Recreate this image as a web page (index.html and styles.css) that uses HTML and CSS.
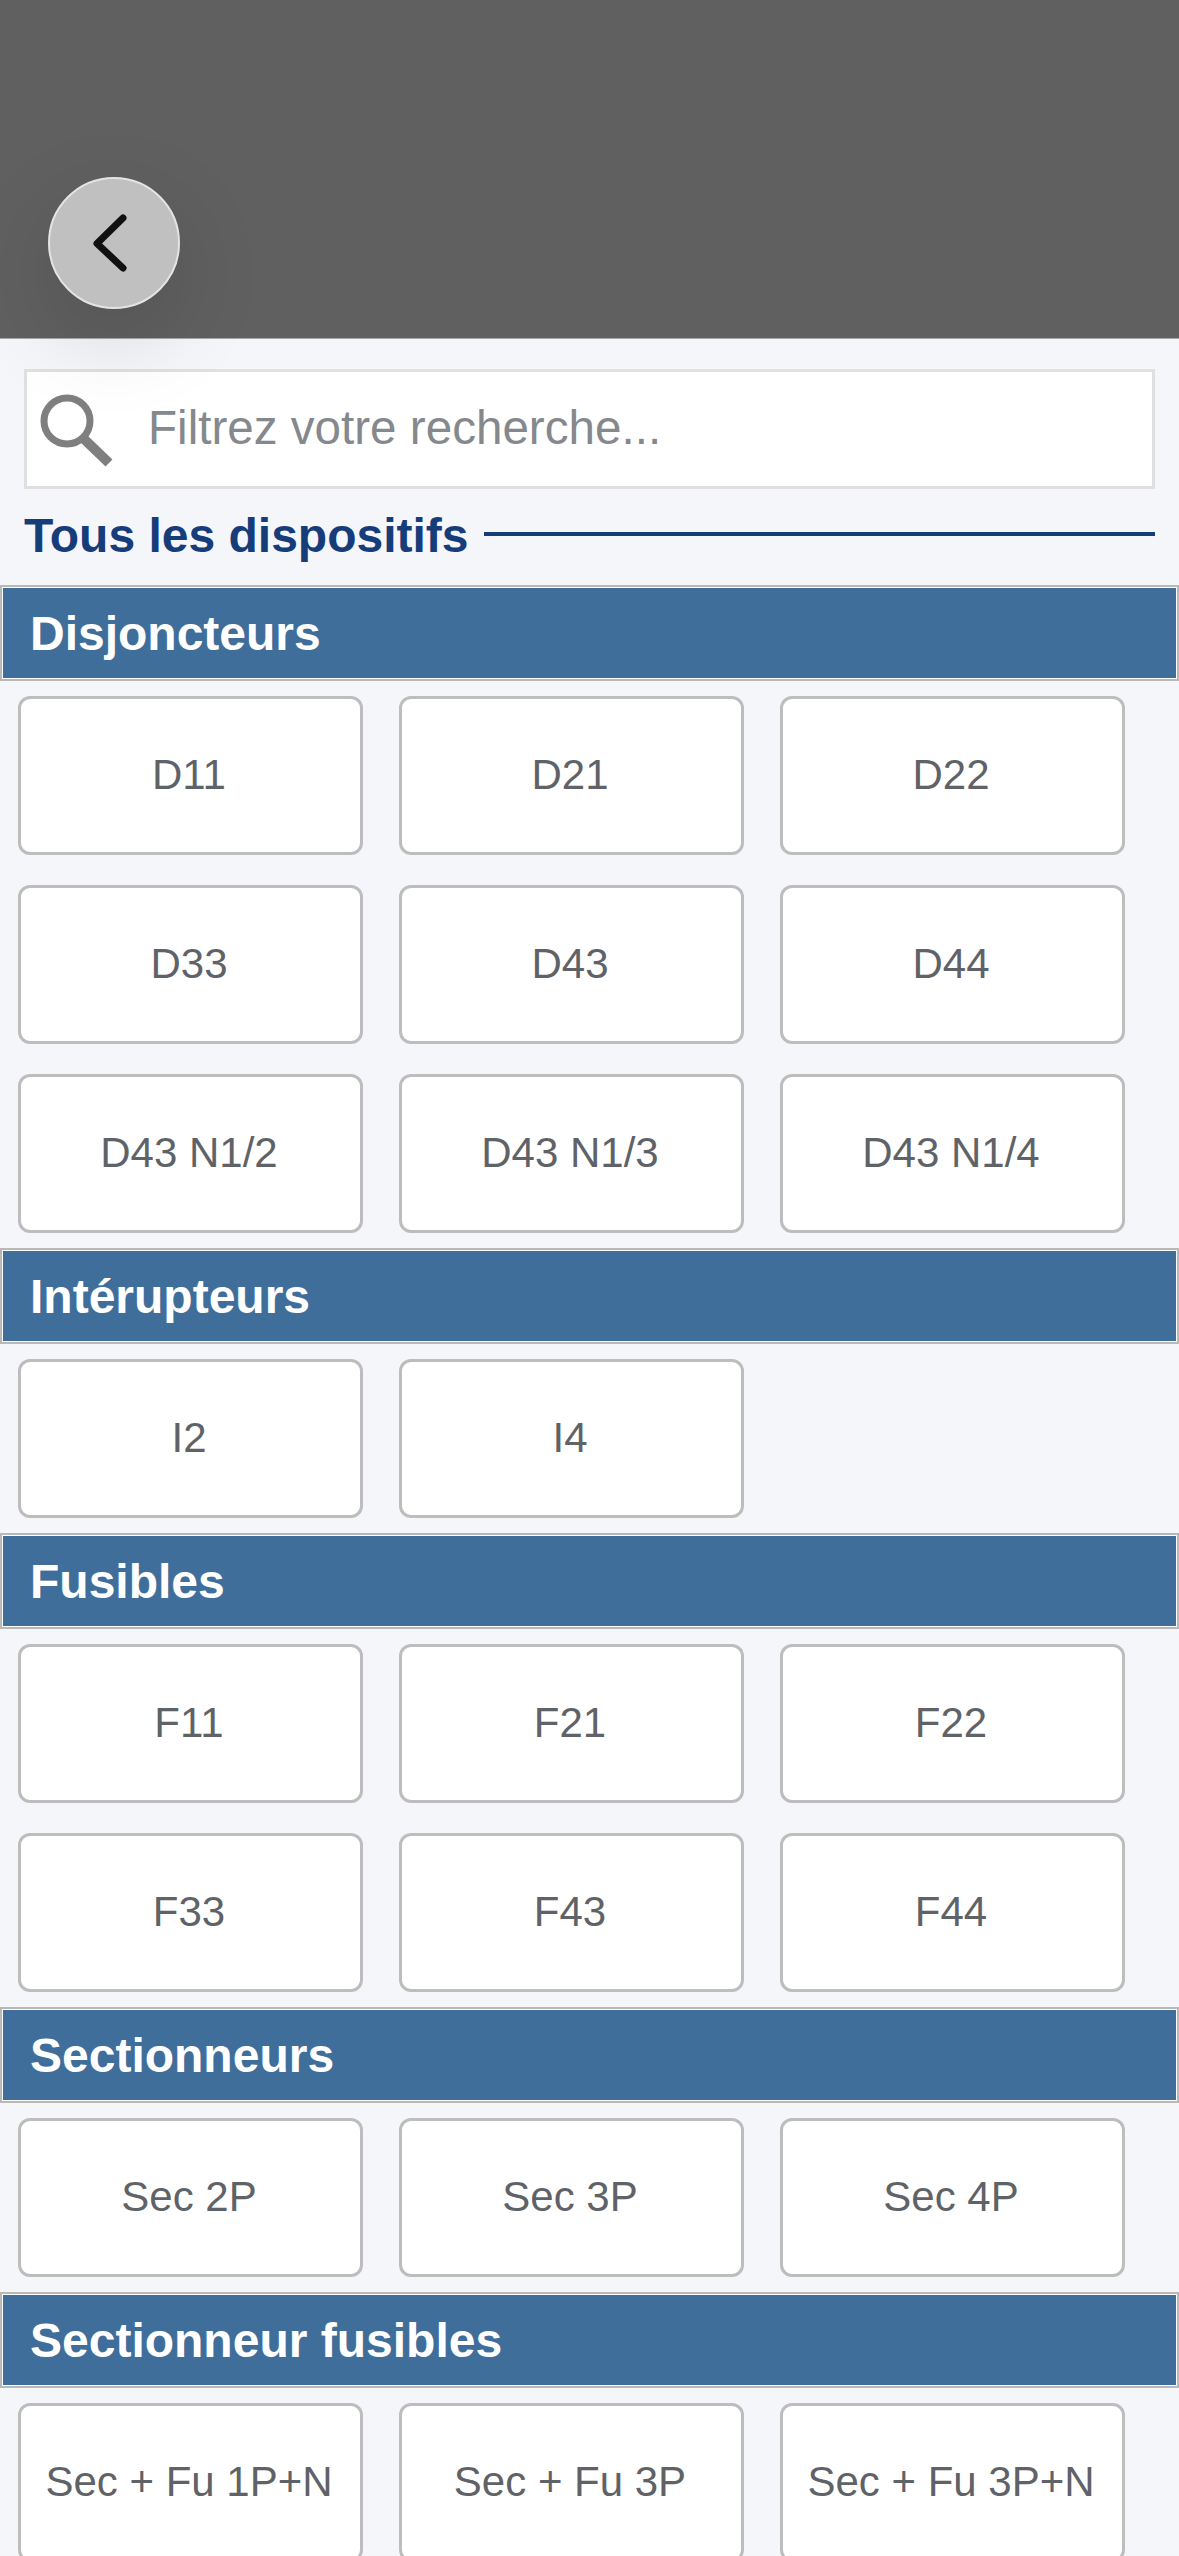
FILE: index.html
```html
<!DOCTYPE html>
<html lang="fr">
  <head>
    <meta charset="UTF-8" />
    <meta name="viewport" content="width=device-width, initial-scale=1" />
    <title>Tous les dispositifs</title>
    <link rel="stylesheet" href="styles.css">
  </head>
  <body>
    <div class="page">
      <div class="banner"></div>

      <button class="back-button" aria-label="Retour">
        <svg viewBox="0 0 34 58" width="34" height="58">
          <path d="M30 4 L4 29.5 L30 54" fill="none" stroke="#111" stroke-width="7" stroke-linecap="round" stroke-linejoin="round" />
        </svg>
      </button>

      <div class="search-box">
        <svg class="search-icon" viewBox="0 0 74 74" width="74" height="74">
          <circle cx="27" cy="27" r="23" fill="none" stroke="#7f7f7f" stroke-width="7" />
          <path d="M44 45 L69 69" fill="none" stroke="#7f7f7f" stroke-width="10" />
        </svg>
        <input class="search-input" type="text" placeholder="Filtrez votre recherche..." />
      </div>

      <div class="title-row">
        <h1>Tous les dispositifs</h1>
        <span class="title-line"></span>
      </div>

      <section>
        <h2>Disjoncteurs</h2>
        <div class="device-grid">
          <button>D11</button>
          <button>D21</button>
          <button>D22</button>
          <button>D33</button>
          <button>D43</button>
          <button>D44</button>
          <button>D43 N1/2</button>
          <button>D43 N1/3</button>
          <button>D43 N1/4</button>
        </div>
      </section>

      <section>
        <h2>Intérupteurs</h2>
        <div class="device-grid">
          <button>I2</button>
          <button>I4</button>
        </div>
      </section>

      <section>
        <h2>Fusibles</h2>
        <div class="device-grid">
          <button>F11</button>
          <button>F21</button>
          <button>F22</button>
          <button>F33</button>
          <button>F43</button>
          <button>F44</button>
        </div>
      </section>

      <section>
        <h2>Sectionneurs</h2>
        <div class="device-grid">
          <button>Sec 2P</button>
          <button>Sec 3P</button>
          <button>Sec 4P</button>
        </div>
      </section>

      <section>
        <h2>Sectionneur fusibles</h2>
        <div class="device-grid">
          <button>Sec + Fu 1P+N</button>
          <button>Sec + Fu 3P</button>
          <button>Sec + Fu 3P+N</button>
        </div>
      </section>
    </div>
  </body>
</html>
```

FILE: styles.css
```css
html,
body {
  margin: 0;
  height: 100%;
  overflow: hidden;
}

body {
  font-family: "Liberation Sans", Arial, sans-serif;
  background: #f4f6fa;
}

.page {
  position: relative;
  height: 2556px;
  overflow: hidden;
}

.banner {
  height: 339px;
  background: #606060;
  border-bottom: 1px solid #a8a8a8;
  box-sizing: border-box;
}

.back-button {
  position: absolute;
  left: 48px;
  top: 177px;
  width: 132px;
  height: 132px;
  padding: 0 8px 0 0;
  display: flex;
  align-items: center;
  justify-content: center;
  box-sizing: border-box;
  background: #c0c0c0;
  border: 2px solid #e4e4e4;
  border-radius: 50%;
  box-shadow: 0 30px 90px rgba(0, 0, 0, 0.13);
  z-index: 2;
}

.search-box {
  display: flex;
  align-items: center;
  gap: 34px;
  height: 120px;
  margin: 30px 24px 0;
  padding-left: 13px;
  box-sizing: border-box;
  background: #fff;
  border: 3px solid #e0e0e0;
}

.search-icon {
  flex: none;
  margin-top: 4px;
}

.search-input {
  flex: 1;
  min-width: 0;
  border: none;
  outline: none;
  padding: 0 0 3px;
  background: transparent;
  font-family: inherit;
  font-size: 47.6px;
  color: #5f6368;
}

.search-input::placeholder {
  color: #85888c;
  opacity: 1;
}

.title-row {
  display: flex;
  align-items: center;
  gap: 15px;
  height: 90px;
  margin: 0 24px 6px;
}

h1 {
  margin: 2px 0 0;
  font-size: 48px;
  font-weight: bold;
  color: #163d7a;
  white-space: nowrap;
}

.title-line {
  flex: 1;
  height: 4px;
  background: #163d7a;
}

h2 {
  margin: 0;
  height: 96px;
  padding: 1px 0 0 28px;
  display: flex;
  align-items: center;
  box-sizing: border-box;
  font-size: 48px;
  font-weight: bold;
  color: #fff;
  background: #406e9a;
  border: 2px solid #b8b8b8;
  box-shadow: inset 0 0 0 1px #fff;
}

.device-grid {
  display: grid;
  grid-template-columns: repeat(3, 345px);
  grid-auto-rows: 159px;
  column-gap: 36px;
  row-gap: 30px;
  padding: 15px 18px;
}

.device-grid button {
  padding: 0 3px 1px 0;
  font-family: inherit;
  font-size: 42px;
  color: #5f6368;
  background: #fff;
  border: 3px solid #bdbdbd;
  border-radius: 12px;
}
```
